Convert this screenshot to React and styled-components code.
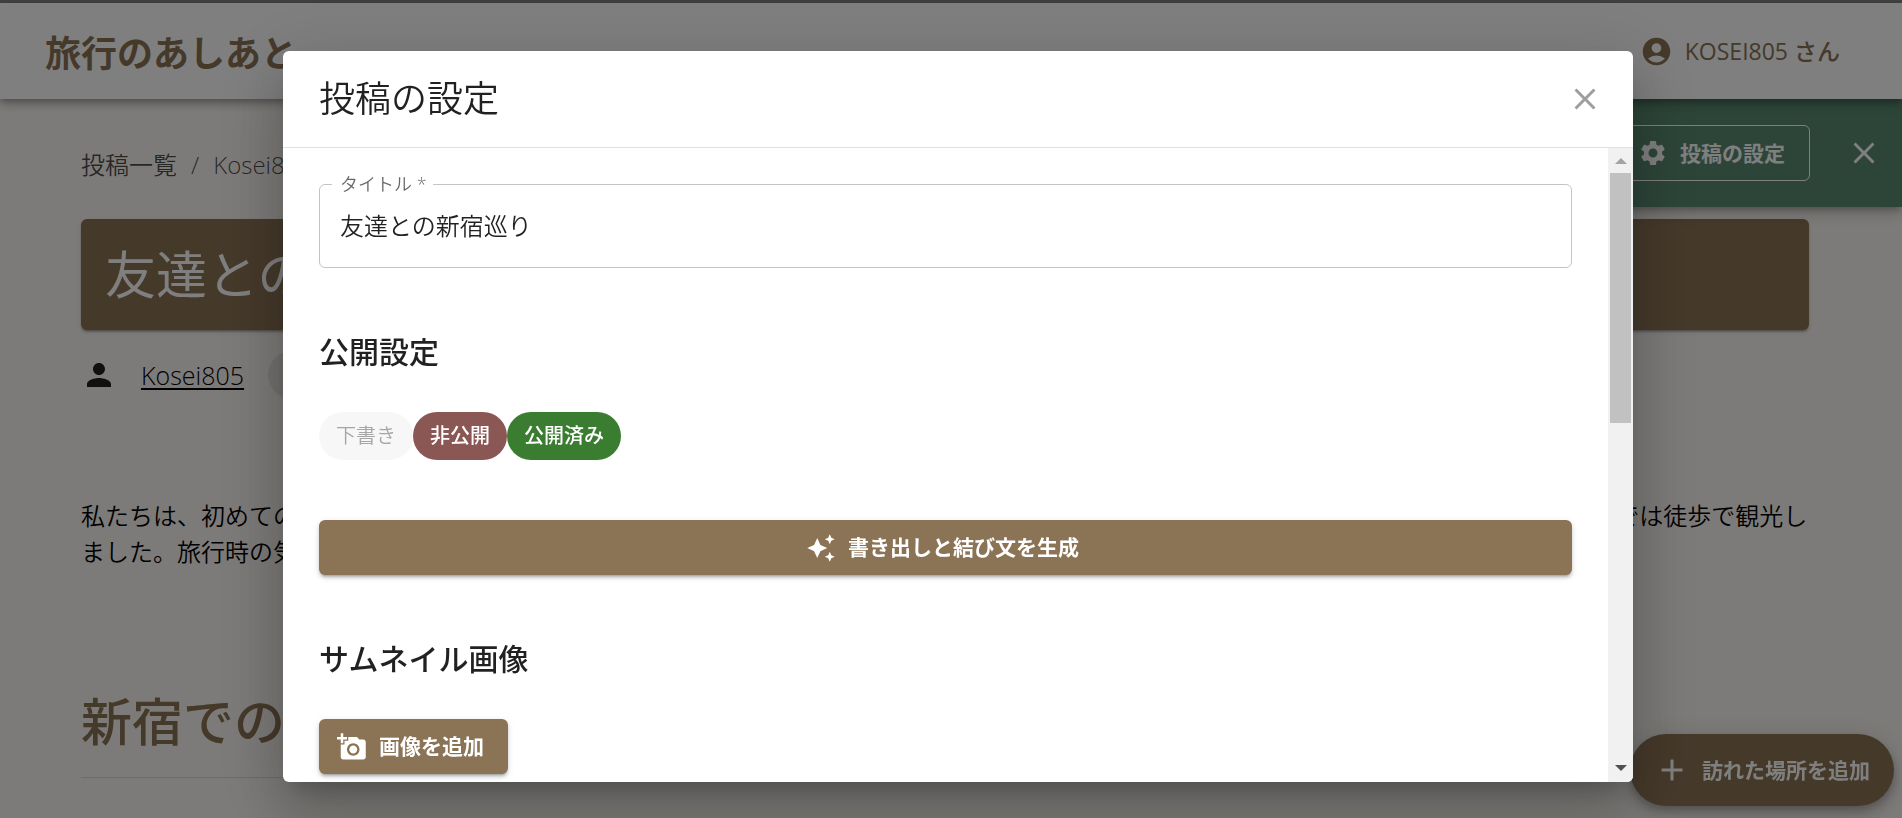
import React from 'react';
import styled, { createGlobalStyle } from 'styled-components';
import {
  MdAccountCircle,
  MdAdd,
  MdAddAPhoto,
  MdAutoAwesome,
  MdClose,
  MdPerson,
  MdSettings,
} from 'react-icons/md';

const brown = '#8b7355';
const sans = '"Open Sans", "Noto Sans CJK JP", sans-serif';
const display = '"Noto Sans CJK JP", sans-serif';

const GlobalStyle = createGlobalStyle`
  * {
    box-sizing: border-box;
  }

  body {
    margin: 0;
    overflow: hidden;
    background: #faf7f2;
    color: rgba(0, 0, 0, 0.87);
    font-family: ${sans};
    font-size: 24px;
    font-weight: 350;
    line-height: 36px;
  }

  button, input {
    font-family: inherit;
  }

  svg {
    flex: none;
  }
`;

const Page = styled.div`
  min-height: 100vh;
`;

const LoadingStrip = styled.div`
  height: 3px;
  background: #848484;
`;

const Header = styled.header`
  position: relative;
  z-index: 2;
  display: flex;
  align-items: center;
  justify-content: space-between;
  height: 96px;
  padding: 0 62px 0 45px;
  background: #fff;
  color: ${brown};
  box-shadow: 0 3px 6px -1px rgba(0, 0, 0, 0.2), 0 6px 8px rgba(0, 0, 0, 0.14),
    0 2px 15px rgba(0, 0, 0, 0.12);
`;

const Logo = styled.a`
  color: inherit;
  font-family: ${display};
  font-size: 36px;
  font-weight: 600;
  line-height: 54px;
  text-decoration: none;
`;

const UserButton = styled.button`
  display: flex;
  align-items: center;
  gap: 12px;
  padding: 0;
  border: 0;
  background: none;
  color: inherit;
  font-size: 23px;
  font-weight: 500;
  line-height: 36px;
`;

const EditBar = styled.div`
  position: absolute;
  top: 99px;
  right: 0;
  z-index: 1;
  display: flex;
  align-items: center;
  justify-content: flex-end;
  gap: 36px;
  width: 600px;
  height: 108px;
  padding-right: 20px;
  background: #5a8a72;
  color: #fff;
  box-shadow: 0 4px 6px -1px rgba(0, 0, 0, 0.2), 0 6px 15px rgba(0, 0, 0, 0.2);
`;

const OutlineButton = styled.button`
  display: flex;
  align-items: center;
  gap: 12px;
  padding: 9px 24px 9px 18px;
  border: 1px solid #fff;
  border-radius: 6px;
  background: none;
  color: inherit;
  font-size: 21px;
  font-weight: 700;
  line-height: 36px;
`;

const IconButton = styled.button`
  display: flex;
  padding: 0;
  border: 0;
  background: none;
  color: ${props => props.$color || 'inherit'};
`;

const Main = styled.main`
  padding: 48px 93px 0 81px;
`;

const Breadcrumbs = styled.nav`
  display: flex;
  gap: 14px;
  margin-bottom: 36px;
  color: rgba(0, 0, 0, 0.7);

  a {
    color: inherit;
    text-decoration: none;
  }
`;

const TitleCard = styled.h1`
  margin: 0 0 21px;
  padding: 24px;
  border-radius: 6px;
  background: ${brown};
  color: #fff;
  font-size: 51px;
  font-weight: 400;
  line-height: 63px;
  box-shadow: 0 3px 2px -2px rgba(0, 0, 0, 0.2), 0 2px 2px rgba(0, 0, 0, 0.14),
    0 2px 5px rgba(0, 0, 0, 0.12);
`;

const Author = styled.div`
  display: flex;
  align-items: center;
  gap: 24px;
  margin-bottom: 99px;

  a {
    color: #000;
    font-size: 25px;
    text-underline-offset: 3px;
  }
`;

const Tag = styled.span`
  padding: 6px 18px;
  border-radius: 24px;
  background: rgba(0, 0, 0, 0.08);
  font-size: 20px;
`;

const Lead = styled.p`
  margin: 0 0 120px;
  color: #000;
`;

const PlaceHeading = styled.h2`
  margin: 0;
  padding-bottom: 24px;
  border-bottom: 1px solid rgba(0, 0, 0, 0.12);
  color: ${brown};
  font-size: 51px;
  font-weight: 500;
  line-height: 63px;
`;

const Fab = styled.button`
  position: fixed;
  right: 8px;
  bottom: 12px;
  display: flex;
  align-items: center;
  gap: 12px;
  height: 72px;
  padding: 0 24px;
  border: 0;
  border-radius: 36px;
  background: ${brown};
  color: #fff;
  font-size: 21px;
  font-weight: 700;
  line-height: 36px;
  box-shadow: 0 4px 8px -1px rgba(0, 0, 0, 0.2), 0 9px 15px rgba(0, 0, 0, 0.14),
    0 2px 27px rgba(0, 0, 0, 0.12);
`;

const Overlay = styled.div`
  position: fixed;
  inset: 0;
  z-index: 10;
  display: flex;
  justify-content: center;
  padding: 51px 269px 36px 283px;
  background: rgba(0, 0, 0, 0.5);
`;

const Dialog = styled.div`
  display: flex;
  flex: 1;
  flex-direction: column;
  overflow: hidden;
  border-radius: 6px;
  background: #fff;
  box-shadow: 0 16px 22px -10px rgba(0, 0, 0, 0.2),
    0 36px 57px 4px rgba(0, 0, 0, 0.14), 0 14px 69px 12px rgba(0, 0, 0, 0.12);
`;

const DialogHeader = styled.div`
  display: flex;
  flex: none;
  align-items: center;
  justify-content: space-between;
  height: 97px;
  padding: 0 30px 0 36px;
  border-bottom: 1px solid rgba(0, 0, 0, 0.12);

  h2 {
    margin: 0;
    font-size: 36px;
    font-weight: 350;
    line-height: 54px;
  }
`;

const DialogBody = styled.div`
  display: flex;
  flex: 1;
  min-height: 0;
`;

const Content = styled.div`
  flex: 1;
  overflow: hidden;
  padding: 26px 36px 0;
`;

const Field = styled.fieldset`
  margin: 0;
  padding: 0 20px;
  border: 1px solid #c4c4c4;
  border-radius: 6px;

  legend {
    margin-left: -8px;
    padding: 0 6px 0 8px;
    color: rgba(0, 0, 0, 0.6);
    font-size: 18px;
    line-height: 20px;
  }

  input {
    display: block;
    width: 100%;
    height: 36px;
    margin: 12px 0 25px;
    padding: 0;
    border: 0;
    outline: 0;
    background: none;
    color: inherit;
    font-size: 24px;
    font-weight: 350;
  }
`;

const SectionTitle = styled.h3`
  margin: 66px 0 42px;
  font-size: 30px;
  font-weight: 500;
  line-height: 36px;
`;

const Chips = styled.div`
  display: flex;
  margin-bottom: 60px;
`;

const Chip = styled.button`
  height: 48px;
  padding: 0 17px;
  border: 0;
  border-radius: 24px;
  background: ${props => props.$color};
  color: #fff;
  font-size: 20px;
  font-weight: 500;
  line-height: 36px;

  &:disabled {
    color: #a6a6a6;
    font-weight: 350;
  }
`;

const Button = styled.button`
  display: flex;
  align-items: center;
  justify-content: center;
  gap: 12px;
  width: ${props => (props.$wide ? '100%' : 'auto')};
  padding: 9px 24px 9px 18px;
  border: 0;
  border-radius: 6px;
  background: ${brown};
  color: #fff;
  font-size: 21px;
  font-weight: 700;
  line-height: 37px;
  box-shadow: 0 4px 2px -3px rgba(0, 0, 0, 0.2), 0 3px 3px rgba(0, 0, 0, 0.14),
    0 2px 7px rgba(0, 0, 0, 0.12);
`;

const ScrollTrack = styled.div`
  display: flex;
  flex: none;
  flex-direction: column;
  align-items: center;
  width: 25px;
  background: #f1f1f1;
`;

const ScrollArrow = styled.div`
  display: flex;
  align-items: center;
  justify-content: center;
  height: ${props => (props.$down ? '28px' : '25px')};
  margin-top: ${props => (props.$down ? 'auto' : '0')};

  &::before {
    content: '';
    border: 6px solid transparent;
    border-top: ${props => (props.$down ? '6px solid #505050' : '0')};
    border-bottom: ${props => (props.$down ? '0' : '6px solid #a3a3a3')};
  }
`;

const ScrollThumb = styled.div`
  width: 21px;
  height: 250px;
  background: #c1c1c1;
`;

const SettingsDialog = () => (
  <Overlay>
    <Dialog role="dialog" aria-modal="true" aria-labelledby="dialog-title">
      <DialogHeader>
        <h2 id="dialog-title">投稿の設定</h2>
        <IconButton type="button" aria-label="閉じる" $color="#9e9e9e">
          <MdClose size={36} />
        </IconButton>
      </DialogHeader>
      <DialogBody>
        <Content>
          <Field>
            <legend><label htmlFor="title">タイトル *</label></legend>
            <input id="title" type="text" defaultValue="友達との新宿巡り" required />
          </Field>

          <SectionTitle>公開設定</SectionTitle>
          <Chips>
            <Chip type="button" $color="#f7f7f7" disabled>下書き</Chip>
            <Chip type="button" $color="#8b5755">非公開</Chip>
            <Chip type="button" $color="#3b7d30">公開済み</Chip>
          </Chips>
          <Button type="button" $wide>
            <MdAutoAwesome size={30} />
            書き出しと結び文を生成
          </Button>

          <SectionTitle>サムネイル画像</SectionTitle>
          <Button type="button">
            <MdAddAPhoto size={30} />
            画像を追加
          </Button>
        </Content>
        <ScrollTrack aria-hidden="true">
          <ScrollArrow />
          <ScrollThumb />
          <ScrollArrow $down />
        </ScrollTrack>
      </DialogBody>
    </Dialog>
  </Overlay>
);

const App = () => (
  <Page>
    <GlobalStyle />
    <LoadingStrip />
    <Header>
      <Logo href="#">旅行のあしあと</Logo>
      <UserButton type="button">
        <MdAccountCircle size={33} />
        KOSEI805 さん
      </UserButton>
    </Header>

    <EditBar>
      <OutlineButton type="button">
        <MdSettings size={30} />
        投稿の設定
      </OutlineButton>
      <IconButton type="button" aria-label="閉じる">
        <MdClose size={36} />
      </IconButton>
    </EditBar>

    <Main>
      <Breadcrumbs>
        <a href="#">投稿一覧</a>
        <span>/</span>
        <a href="#">Kosei805</a>
      </Breadcrumbs>
      <TitleCard>友達との新宿巡り</TitleCard>
      <Author>
        <MdPerson size={36} />
        <a href="#">Kosei805</a>
        <Tag>公開済み</Tag>
      </Author>
      <Lead>
        私たちは、初めての新宿を一日かけてゆっくりと巡りました。駅までは電車で向かい、待ち合わせをしてから昼食をとり、その後の新宿の街中では徒歩で観光しました。旅行時の気温は過ごしやすいものでした。
      </Lead>
      <PlaceHeading>新宿での観光</PlaceHeading>
    </Main>

    <Fab type="button">
      <MdAdd size={36} />
      訪れた場所を追加
    </Fab>
    <SettingsDialog />
  </Page>
);

export default App;
